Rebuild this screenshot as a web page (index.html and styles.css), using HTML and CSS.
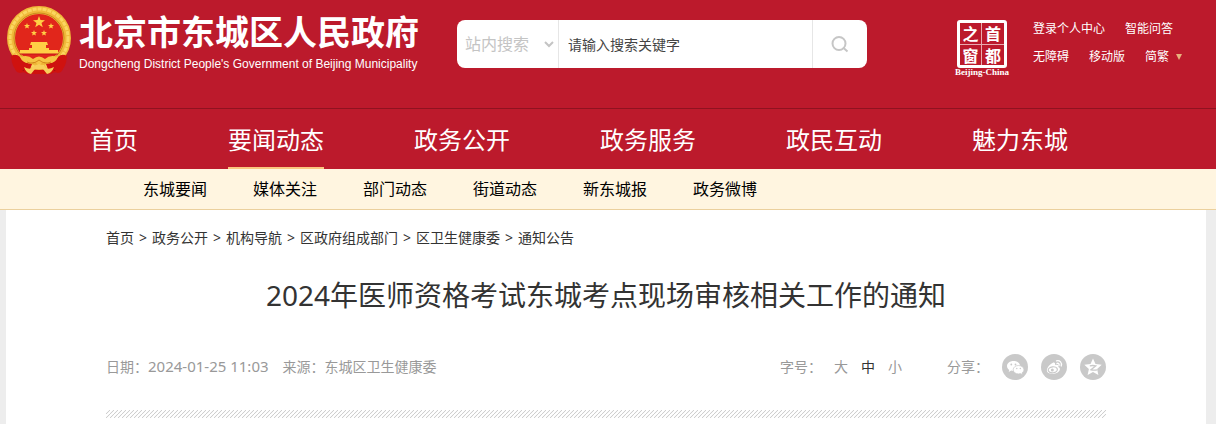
FILE: index.html
```html
<!DOCTYPE html>
<html lang="zh-CN">
<head>
  <meta charset="UTF-8">
  <title>2024年医师资格考试东城考点现场审核相关工作的通知</title>
  <link rel="stylesheet" href="styles.css">
</head>
<body>

  <!-- 头部 -->
  <header class="header">
    <div class="header-top">
      <a class="logo" href="#">
        <svg class="emblem" viewBox="0 0 66 70" aria-hidden="true">
          <path d="M7 47 Q5 58 10 61 Q8 66 14 67 Q18 65 21 68 H45 Q48 65 52 67 Q58 66 56 61 Q61 58 59 47 Z" fill="#cf120f"/>
          <path d="M10 53 q5 4 2 11 M15 56 q5 4 2 9 M56 53 q-5 4 -2 11 M51 56 q-5 4 -2 9" fill="none" stroke="#96100d" stroke-width="1"/>
          <circle cx="33" cy="32" r="28" fill="#e1261b" stroke="#f0b93a" stroke-width="8"/>
          <circle cx="33" cy="32" r="29" fill="none" stroke="#fbd660" stroke-width="3" stroke-dasharray="4 1"/>
          <circle cx="33" cy="32" r="25" fill="none" stroke="#c98a1c" stroke-width="1"/>
          <path d="M5 50 Q10 47 14 51 Q18 57 26 58 L23 66 Q18 62 12 66 Q6 62 5 50Z M61 50 Q56 47 52 51 Q48 57 40 58 L43 66 Q48 62 54 66 Q60 62 61 50Z" fill="#cf120f"/>
          <g fill="#ffcf45">
            <path d="M33 10 l1.500 4 4.500 .2 -3.500 2.700 1.300 4.300 -3.800 -2.500 -3.800 2.500 1.300 -4.300 -3.500 -2.700 4.500 -.2z"/>
            <path d="M21 17 l.8 2 2.200.1 -1.700 1.400.6 2.100 -1.900 -1.200 -1.900 1.200.6 -2.100 -1.700 -1.400 2.200 -.1z"/>
            <path d="M45 17 l.8 2 2.200.1 -1.700 1.400.6 2.100 -1.900 -1.200 -1.900 1.200.6 -2.100 -1.700 -1.400 2.200 -.1z"/>
            <path d="M28 24 l.8 2 2.200.1 -1.700 1.400.6 2.100 -1.900 -1.200 -1.900 1.200.6 -2.100 -1.700 -1.400 2.200 -.1z"/>
            <path d="M38 24 l.8 2 2.200.1 -1.700 1.400.6 2.100 -1.900 -1.200 -1.900 1.200.6 -2.100 -1.700 -1.400 2.200 -.1z"/>
            <path d="M25 36 h16 l1 3 h-2 v3 h-14 v-3 h-2z"/>
            <path d="M23 42 h20 v2 h9 v4 H14 v-4 h9z"/>
          </g>
          <path d="M14 48 h38" stroke="#c4151a" stroke-width="1"/>
          <path d="M14 51 Q22 48 27 53 Q33 48 39 53 Q44 48 52 51 Q49 58 42 57 L38 56 L33 59 L28 56 L24 57 Q17 58 14 51Z" fill="#f6c443"/>
          <path d="M21 56 Q27 59 33 54 Q39 59 45 56" fill="none" stroke="#d5881b" stroke-width="1"/>
          <path d="M18 61 Q25 65 28 60 L33 58 L38 60 Q41 65 48 61 Q46 67 41 68 L37 63 H29 L25 68 Q20 67 18 61Z" fill="#f8cf5b"/>
        </svg>
        <span class="logo-text">
          <strong>北京市东城区人民政府</strong>
          <span class="logo-en">Dongcheng District People's Government of Beijing Municipality</span>
        </span>
      </a>

      <form class="search">
        <label class="search-type">
          <select name="type" aria-label="搜索范围">
            <option>站内搜索</option>
          </select>
          <svg width="10" height="7" viewBox="0 0 10 7" aria-hidden="true"><path d="M1 1 L5 5 L9 1" fill="none" stroke="#c4c4c4" stroke-width="2"/></svg>
        </label>
        <input class="search-input" type="text" name="q" aria-label="搜索关键字" placeholder="请输入搜索关键字">
        <button class="search-btn" type="submit" aria-label="搜索">
          <svg width="18" height="17" viewBox="0 0 18 17" aria-hidden="true"><circle cx="8" cy="7.500" r="6.500" fill="none" stroke="#c6c6c6" stroke-width="2"/><path d="M12 11.500 L16.500 15.500" stroke="#c6c6c6" stroke-width="2"/></svg>
        </button>
      </form>

      <a class="capital" href="#">
        <span class="capital-seal"><i>之</i><i>首</i><i>窗</i><i>都</i></span>
        <span class="capital-en">Beijing-China</span>
      </a>

      <div class="tools">
        <div class="tools-row"><a href="#">登录个人中心</a><a href="#">智能问答</a></div>
        <div class="tools-row"><a href="#">无障碍</a><a href="#">移动版</a><a href="#" class="lang">简繁<svg width="6" height="6" viewBox="0 0 6 6" aria-hidden="true"><path d="M0 0 H6 L3 6Z" fill="#e8b27c"/></svg></a></div>
      </div>
    </div>

    <nav class="nav">
      <a href="#">首页</a>
      <a href="#" class="active">要闻动态</a>
      <a href="#">政务公开</a>
      <a href="#">政务服务</a>
      <a href="#">政民互动</a>
      <a href="#">魅力东城</a>
    </nav>
  </header>

  <!-- 二级导航 -->
  <nav class="subnav">
    <a href="#">东城要闻</a>
    <a href="#">媒体关注</a>
    <a href="#">部门动态</a>
    <a href="#">街道动态</a>
    <a href="#">新东城报</a>
    <a href="#">政务微博</a>
  </nav>

  <!-- 正文 -->
  <main class="main">
    <div class="crumbs">
      <a href="#">首页</a><span>&gt;</span><a href="#">政务公开</a><span>&gt;</span><a href="#">机构导航</a><span>&gt;</span><a href="#">区政府组成部门</a><span>&gt;</span><a href="#">区卫生健康委</a><span>&gt;</span><a href="#">通知公告</a>
    </div>

    <h1>2024年医师资格考试东城考点现场审核相关工作的通知</h1>

    <div class="meta">
      <span class="date">日期：<time>2024-01-25 11:03</time></span>
      <span>来源：东城区卫生健康委</span>
      <div class="font-size">
        <span>字号：</span>
        <button type="button">大</button>
        <button type="button" class="on">中</button>
        <button type="button">小</button>
      </div>
      <div class="share">
        <span>分享：</span>
        <a href="#" aria-label="微信">
          <svg viewBox="0 0 26 26"><circle cx="13" cy="13" r="13" fill="#c9c9c9"/><path d="M11.500 7 C7.800 7 5 9.200 5 12 c0 1.600 .9 3 2.300 3.900 L6.700 18 l2.500 -1.400 c.8 .2 1.500 .3 2.300 .3 C15.200 16.900 18 14.800 18 12 S15.200 7 11.500 7z" fill="#fff"/><path d="M16.500 11.500 c-3 0 -5.300 1.800 -5.300 4.200 s2.300 4.200 5.300 4.200 c.7 0 1.400 -.1 2 -.3 l2 1.200 -.5 -1.900 c1.200 -.8 1.900 -1.900 1.900 -3.200 0 -2.400 -2.400 -4.200 -5.400 -4.200z" fill="#fff" stroke="#c9c9c9" stroke-width=".7"/><g fill="#c9c9c9"><circle cx="9.300" cy="10.500" r=".9"/><circle cx="13.500" cy="10.500" r=".9"/><circle cx="14.800" cy="14.500" r=".7"/><circle cx="18.300" cy="14.500" r=".7"/></g></svg>
        </a>
        <a href="#" aria-label="微博">
          <svg viewBox="0 0 26 26"><circle cx="13" cy="13" r="13" fill="#c9c9c9"/><path d="M11.500 9 C13.500 8 14.500 9 14 11 c2.800 -.9 4 .1 3.300 2 2 .7 2.200 2.500 .7 4.200 -2.700 3.200 -10 3.600 -11.800 .5 C4.900 15 8 10.800 11.500 9z" fill="#fff"/><ellipse cx="11.800" cy="15.800" rx="4.600" ry="3" transform="rotate(-8 11.800 15.800)" fill="none" stroke="#c9c9c9" stroke-width="1.200"/><circle cx="11.300" cy="16" r="1.500" fill="#c9c9c9"/><path d="M15.500 6.800 c3.400 -.8 5.800 2 4.700 5.200 M16 9.300 c1.600 -.3 2.500 .8 2 2.200" fill="none" stroke="#fff" stroke-width="1.300" stroke-linecap="round"/></svg>
        </a>
        <a href="#" aria-label="QQ空间">
          <svg viewBox="0 0 26 26"><circle cx="13" cy="13" r="13" fill="#c9c9c9"/><path d="M13 4.500 l2.500 5.600 6.200 .7 -4.600 4.100 1.300 6.100 -5.400 -3.100 -5.400 3.100 1.300 -6.100 -4.600 -4.100 6.200 -.7z" fill="#fff"/><path d="M9.800 11.800 q3 -.6 6 0 L11 15.800 q3 .8 6 0" fill="none" stroke="#c9c9c9" stroke-width="1.300"/></svg>
        </a>
      </div>
    </div>

    <div class="stripe"></div>
  </main>

</body>
</html>
```
FILE: styles.css
```css
* { margin: 0; padding: 0; box-sizing: border-box; }
body {
  font-family: "Noto Sans", "Noto Sans CJK SC", sans-serif;
  font-size: 14px;
  color: #333;
  background: #ededed;
}
a { color: inherit; text-decoration: none; }
svg { display: block; }
button, input, select { font: inherit; border: 0; background: none; outline: none; }

/* 头部 */
.header { background: #bc1a2c; color: #fff; }
.header-top {
  display: flex;
  align-items: flex-start;
  height: 109px;
  padding: 0 34px 0 6px;
  border-bottom: 1px solid #8f1220;
}
.logo { display: flex; padding-top: 6px; }
.emblem { width: 66px; height: 70px; margin-right: 7px; }
.logo-text { display: flex; flex-direction: column; width: 340px; padding-top: 6px; }
.logo-text strong { font-size: 34px; line-height: 40px; white-space: nowrap; }
.logo-en {
  font: 12px/24px "Liberation Sans", Arial, sans-serif;
  white-space: nowrap;
}

.search {
  display: flex;
  width: 410px;
  height: 48px;
  margin: 20px 0 0 38px;
  border-radius: 8px;
  background: #fff;
  overflow: hidden;
}
.search-type {
  display: flex;
  align-items: center;
  width: 102px;
  padding: 0 4px 0 8px;
  border-right: 1px solid #e6e6e6;
}
.search-type select {
  flex: 1;
  min-width: 0;
  appearance: none;
  font-size: 16px;
  color: #c4c4c4;
}
.search-input { flex: 1; min-width: 0; padding: 0 9px; color: #444; }
.search-input::placeholder { color: #444; }
.search-btn {
  display: flex;
  align-items: center;
  justify-content: center;
  width: 55px;
  border-left: 1px solid #e6e6e6;
}

.capital { width: 56px; margin: 20px 0 0 auto; }
.capital-seal {
  display: grid;
  grid-template-columns: 1fr 1fr;
  width: 50px;
  height: 48px;
  margin: 0 auto;
  border: 3px solid #fff;
  border-radius: 3px;
}
.capital-seal i {
  font: bold 16px/20px "Noto Sans CJK SC", sans-serif;
  text-align: center;
}
.capital-seal i:nth-child(odd) { border-right: 1px solid #e9a9ae; }
.capital-seal i:nth-child(-n+2) { border-bottom: 1px solid #e9a9ae; }
.capital-en {
  display: block;
  font: bold 9px/9px "Liberation Serif", serif;
  text-align: center;
  white-space: nowrap;
}

.tools { width: 149px; margin: 20px 0 0 23px; font-size: 12px; line-height: 18px; }
.tools-row { display: flex; gap: 20px; margin-bottom: 10px; white-space: nowrap; }
.lang { display: flex; align-items: center; gap: 7px; }

/* 导航 */
.nav { display: flex; gap: 90px; padding: 0 90px; }
.nav a { height: 60px; font-size: 24px; line-height: 62px; white-space: nowrap; }
.nav .active { border-bottom: 2px solid #fbc67f; }
.subnav {
  display: flex;
  gap: 46px;
  padding: 0 143px;
  background: #fff5e0;
  border-bottom: 1px solid #ebd09d;
  color: #000;
}
.subnav a { font-size: 16px; line-height: 40px; white-space: nowrap; }

/* 正文 */
.main { margin: 0 10px 0 6px; padding: 16px 100px 6px; background: #fff; }
.crumbs { line-height: 24px; }
.crumbs span { display: inline-block; width: 18px; text-align: center; }
h1 {
  margin-top: 24px;
  font-size: 28px;
  font-weight: normal;
  line-height: 42px;
  text-align: center;
}
.meta {
  display: flex;
  align-items: center;
  margin-top: 37px;
  line-height: 26px;
  color: #999;
  white-space: nowrap;
}
.date { margin-right: 14px; }
.date time { font-size: 15px; }
.font-size { display: flex; margin-left: auto; }
.font-size span { margin-right: 12px; }
.font-size button { width: 14px; margin-right: 13px; color: #999; cursor: pointer; }
.font-size .on { color: #333; }
.share { display: flex; gap: 13px; margin-left: 32px; }
.share a { width: 26px; height: 26px; }
.stripe {
  height: 8px;
  margin-top: 30px;
  background: linear-gradient(135deg, #fff 36%, #cfcfcf 50%, #fff 64%) 0 0 / 4px 4px;
}
```
